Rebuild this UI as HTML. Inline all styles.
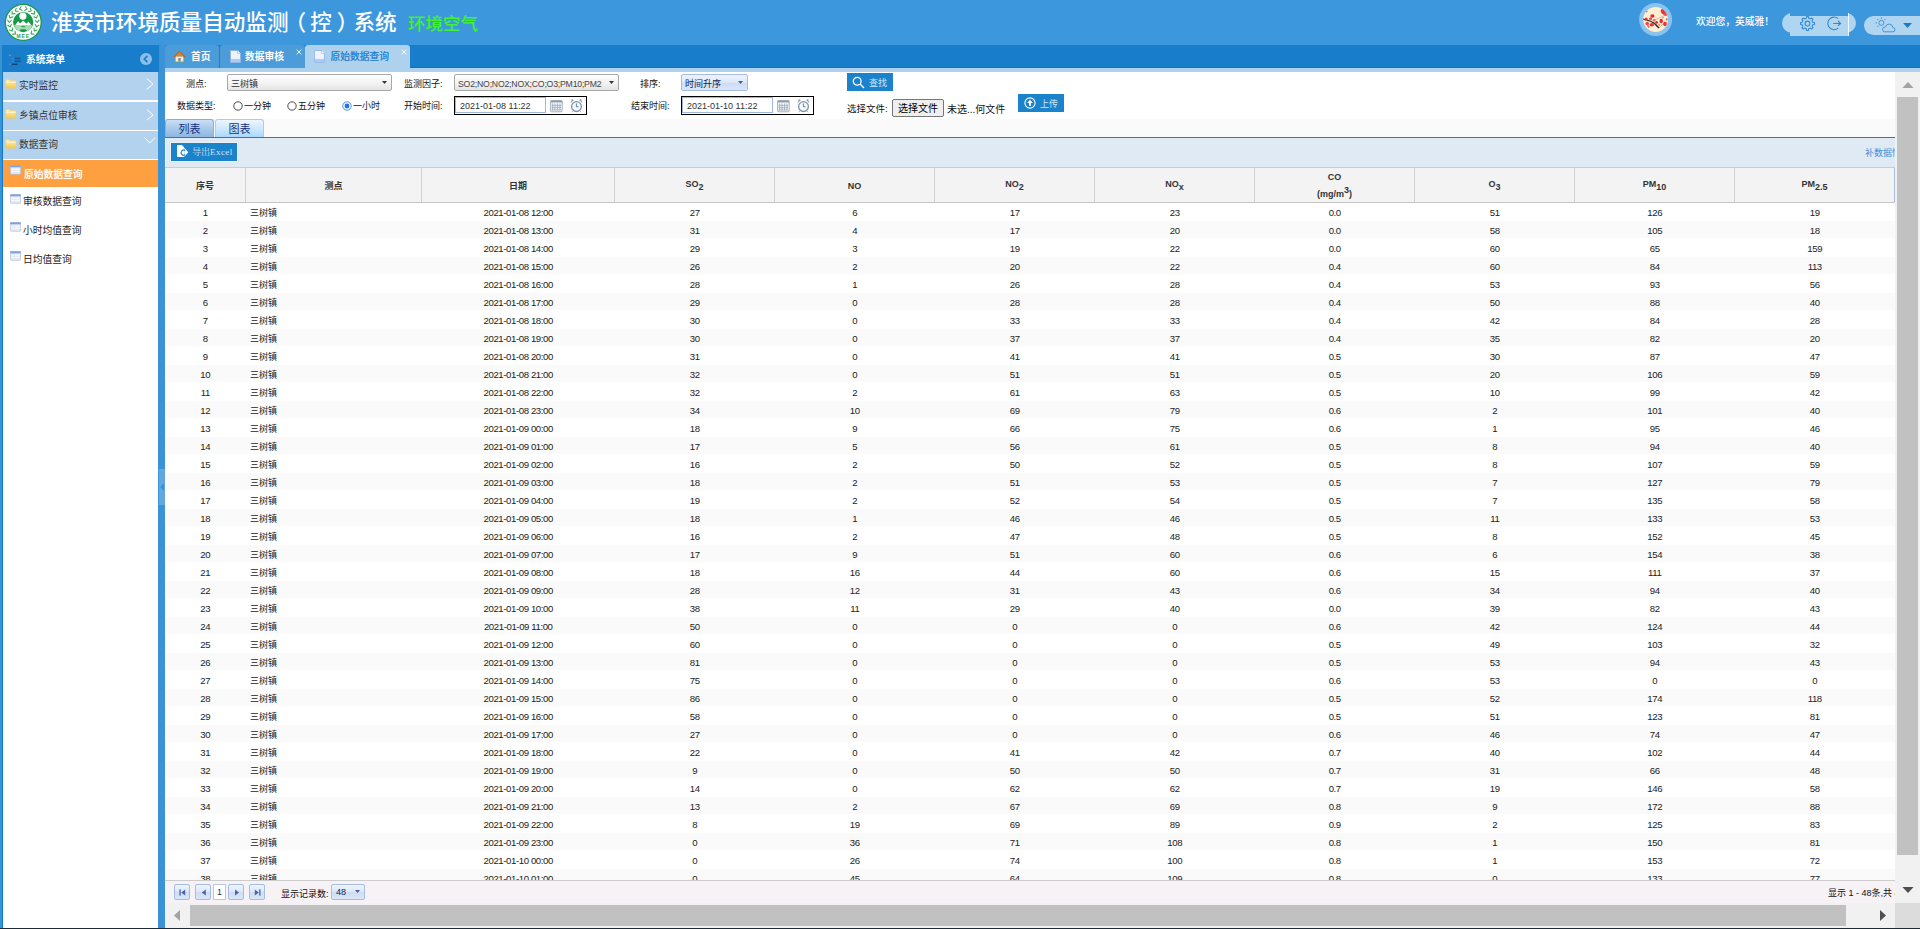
<!DOCTYPE html>
<html lang="zh-CN">
<head>
<meta charset="utf-8">
<title>淮安市环境质量自动监测（控）系统</title>
<style>
*{box-sizing:border-box;margin:0;padding:0}
html,body{width:1920px;height:929px;overflow:hidden;background:#fff}
body{position:relative;font-family:"Liberation Sans","Noto Sans CJK SC",sans-serif;font-size:9px;color:#222}
.abs{position:absolute}
/* header */
#hdr{left:0;top:0;width:1920px;height:45px;background:#3c97dd}
#title{left:51px;top:8px;height:30px;line-height:30px;font-size:21.6px;font-weight:500;color:#fff;white-space:nowrap}
#sub{left:408px;top:9px;height:30px;line-height:30px;font-size:17.5px;font-weight:500;color:#40f236;white-space:nowrap}
#welcome{left:1696px;top:11.5px;height:20px;line-height:20px;font-size:9.75px;font-weight:500;color:#fff;white-space:nowrap}
/* left edge + nav */
#ledge{left:0;top:45px;width:3px;height:884px;background:#3b93d6;border-right:1px solid #0f79cf}
#nav{left:0;top:45px;width:1920px;height:23px;background:#187ecb}
#navline{left:165px;top:67px;width:1755px;height:1px;background:#0c74c5}
#band{left:165px;top:68px;width:1755px;height:4px;background:#aed2ee}
/* sidebar */
#side{left:3px;top:45px;width:155px;height:883px;background:#fff;z-index:1}
#sidet{left:-1px;top:0;width:157px;height:27px;background:#187ecb;color:#fff;font-weight:bold;font-size:9.75px;line-height:27px}
.mi{left:0;width:155px;height:28px;background:#b3d2ee;font-size:9.75px;color:#333;line-height:28px;padding-left:16px}
.sm{left:0;width:155px;height:28px;font-size:9.75px;color:#222;line-height:30px;padding-left:20px}
#split{left:158px;top:45px;width:7px;height:884px;background:#3b93d6}
#handle{left:159px;top:469px;width:6px;height:36px;background:#62a8e0}
/* tabs */
.tab{top:45px;height:23px;line-height:23px;border-radius:3px 3px 0 0;font-size:9.75px;color:#fff;font-weight:bold;background:#4d9cda;white-space:nowrap}
/* content */
#content{left:165px;top:72px;width:1730px;height:831px;background:#fff;overflow:hidden}
.lbl{height:16px;line-height:16px;font-size:9px;color:#111;white-space:nowrap}
.sel{border:1px solid #a9a9a9;border-radius:2px;background:linear-gradient(#fff,#f4f4f4 50%,#e4e4e4);font-size:9px;line-height:18.5px;color:#333;padding-left:3px;white-space:nowrap;overflow:hidden}
.dbox{border:1px solid #000;background:#fff}
.dinp{left:0;top:0;height:16px;border:1px solid #9db7e0;font-size:9px;line-height:16.5px;color:#333;padding-left:4px;white-space:nowrap;overflow:hidden}
.btn{background:#1b83cc;color:#cfe6f8;font-size:9px;white-space:nowrap}
#subtabs{left:0;top:47px;width:1730px;height:18px;background:#fafafa}
.st{top:0;height:18px;line-height:18px;font-size:11px;color:#17307a;text-align:center;border:1px solid #8db2e3;border-bottom:0;border-radius:3px 3px 0 0}
#bline{left:0;top:65px;width:1730px;height:1px;background:#1a80cc}
#tbar{left:0;top:66px;width:1730px;height:29px;background:#e0eaf4;border-left:1px solid #f4f8fc}
/* grid */
#ghead{left:0;top:95px;width:1730px;height:36px;background:#f3f3f3;border-top:1px solid #ccc;border-bottom:1px solid #c6c6c6}
.hc{top:0;height:34px;padding-top:2px;border-right:1px solid #d0d0d0;text-align:center;font-weight:bold;font-size:9px;color:#333;display:flex;align-items:center;justify-content:center;line-height:13px}
.hc sub,.hc sup{font-size:9px}
#gbody{left:0;top:131px;width:1730px;height:677px;overflow:hidden}
#gbody table{border-collapse:collapse;table-layout:fixed;width:1730px}
#gbody td{height:18px;line-height:17px;padding-top:1px !important;text-align:center;font-size:9.6px;letter-spacing:-.4px;color:#222;padding:0 .5px 0 0;white-space:nowrap}
#gbody td.l{text-align:left;padding-left:4px;font-size:9px;letter-spacing:0}
#gbody td.l span{position:relative;top:1px}
#gbody tr.alt td{background:#fafafa;box-shadow:inset 0 -1px 0 #fff}
#gbody tr.alt td:first-child{box-shadow:inset 0 -1px 0 #fff,inset 1px 0 0 #fff}
#gline{left:0;top:808px;width:1730px;height:1px;background:#ccc}
#pager{left:0;top:809px;width:1730px;height:22px;background:#f6f2f5}
.pb{top:3px;width:16px;height:16px;border:1px solid #a3bde3;border-radius:2px;background:linear-gradient(#eef4fd,#dbe7f8 50%,#cddcf3 51%,#dbe7f8)}
/* scrollbars */
#vs{left:1895px;top:72px;width:25px;height:831px;background:#f1f1f1}
#hs{left:165px;top:903px;width:1730px;height:25px;background:#f1f1f1}
#corner{left:1895px;top:903px;width:25px;height:25px;background:#dcdcdc}
#bot{left:0;top:928px;width:1920px;height:1px;background:#1d2b36;z-index:5}
</style>
</head>
<body>
<div id="hdr" class="abs"></div>
<div id="title" class="abs">淮安市环境质量自动监测<span style="position:relative;left:-4px">（</span>控<span style="position:relative;left:5px">）</span>系统</div>
<div id="sub" class="abs">环境空气</div>
<div id="welcome" class="abs">欢迎您，英威雅！</div>


<!-- logo -->
<svg class="abs" style="left:4px;top:3px" width="39" height="39" viewBox="0 0 39 39">
  <circle cx="19.3" cy="19.4" r="18.6" fill="#169a47"/>
  <circle cx="19.3" cy="19.4" r="17.3" fill="#fff"/>
  <path d="M10.97 28.12 L11.53 30.97 L8.63 31.11 M27.63 28.12 L27.07 30.97 L29.97 31.11 M8.62 25.01 L8.25 27.89 L5.45 27.10 M29.98 25.01 L30.35 27.89 L33.15 27.10 M7.39 21.32 L6.12 23.93 L3.72 22.29 M31.21 21.32 L32.48 23.93 L34.88 22.29 M7.40 17.43 L5.36 19.50 L3.61 17.18 M31.20 17.43 L33.24 19.50 L34.99 17.18 M8.65 13.74 L6.06 15.05 L5.14 12.30 M29.95 13.74 L32.54 15.05 L33.46 12.30 M11.01 10.64 L8.13 11.06 L8.13 8.16 M27.59 10.64 L30.47 11.06 L30.47 8.16 M14.23 8.46 L11.37 7.94 L12.30 5.19 M24.37 8.46 L27.23 7.94 L26.30 5.19 M17.98 7.41 L15.43 6.01 L17.19 3.70 M20.62 7.41 L23.17 6.01 L21.41 3.70" fill="none" stroke="#2fa85a" stroke-width="1.05" stroke-linecap="round" stroke-linejoin="round"/>
  <circle cx="19.2" cy="19.2" r="10.1" fill="#169a47"/>
  <circle cx="18.9" cy="13.1" r="3.6" fill="#fff"/>
  <path d="M11.3 22 L14 18.2 L16 20.6 L19.2 17.6 L22.4 20.8 L24.4 18.6 L27.1 22 Z" fill="#fff"/>
  <path d="M10.2 22 H28.2 Q27.4 26.5 23.5 28.3 L21.5 26.2 H17 L15 28.3 Q11 26.5 10.2 22Z" fill="#a8dbb9"/>
  <rect x="17.3" y="23.2" width="3.8" height="1" fill="#169a47"/>
  <text x="19.3" y="34.6" font-size="5" font-weight="bold" fill="#2aa556" text-anchor="middle" font-family="Liberation Sans, sans-serif" letter-spacing="0.95">MEE</text>
</svg>
<!-- avatar -->
<svg class="abs" style="left:1639px;top:3px" width="34" height="34" viewBox="0 0 34 34">
  <defs><clipPath id="avc"><circle cx="16.6" cy="16.5" r="12.4"/></clipPath></defs>
  <circle cx="16.6" cy="16.5" r="16.5" fill="#8cc3ee"/>
  <circle cx="16.6" cy="16.5" r="12.4" fill="#fdefd2"/>
  <g clip-path="url(#avc)">
    <path d="M3.5 16.6 Q8 17.4 11.5 18.8 Q15 20.4 17.6 23.8 L19.6 25.6 L20.4 24.6 Q17.6 21.4 15.4 19.6 Q12 17.4 8 16.6 Q5.6 16 3.5 15.4Z" fill="#3a2424"/>
    <path d="M19.8 25 L23.6 21.4 L27.6 19.6" stroke="#c07878" stroke-width=".7" fill="none"/>
    <path d="M13 17.8 L19.5 15.4 L25 12.6" stroke="#cf9a9a" stroke-width=".7" fill="none"/>
    <path d="M8.6 21 L9.6 24.8" stroke="#7a4a4a" stroke-width=".7" fill="none"/>
    <ellipse cx="13.4" cy="13" rx="2.1" ry="1.7" fill="#e8262b"/><circle cx="11.6" cy="15.8" r="1.5" fill="#ee4a4d"/>
    <circle cx="7.2" cy="16" r="1.5" fill="#ea3538"/><circle cx="8.2" cy="20.6" r="1.8" fill="#ee4a4d"/>
    <ellipse cx="12.8" cy="21.8" rx="2.2" ry="1.8" fill="#ea3538"/><circle cx="17.6" cy="19.4" r="1.4" fill="#e8262b"/>
    <ellipse cx="22.2" cy="18" rx="1.7" ry="2.3" fill="#e8262b"/><ellipse cx="26" cy="21" rx="1.8" ry="2.2" fill="#ea3538"/>
    <ellipse cx="24.6" cy="8.6" rx="2.6" ry="3.2" transform="rotate(-35 24.6 8.6)" fill="#ea3538"/><circle cx="26.6" cy="11.4" r="1.7" fill="#ee4a4d"/>
    <circle cx="7.6" cy="8.4" r=".9" fill="#ee4a4d"/><circle cx="27.8" cy="16.4" r="1.1" fill="#ee6a6a"/>
    <circle cx="15.2" cy="17.2" r="1.3" fill="#f06a6a"/><circle cx="9.6" cy="23.6" r="1.1" fill="#f06a6a"/>
    <circle cx="20.2" cy="21.8" r="1" fill="#f07a7a"/><circle cx="24" cy="14.6" r=".9" fill="#f08a8a"/>
  </g>
</svg>
<!-- pills -->
<div class="abs" style="left:1782px;top:13px;width:74px;height:20px;border-radius:10px;background:#b0d5f1"></div>
<div class="abs" style="left:1790px;top:12px;width:59px;height:4px;background:#3c97dd"></div>
<div class="abs" style="left:1790px;top:16px;width:59px;height:20px;background:#b0d5f1"></div>
<div class="abs" style="left:1848px;top:13px;width:1px;height:23px;background:#f4fafe"></div>
<svg class="abs" style="left:1799.5px;top:15.6px" width="15" height="15" viewBox="0 0 15 15">
  <path d="M12.77 6.32 L14.44 6.57 L14.44 8.43 L12.77 8.68 L12.06 10.39 L13.06 11.75 L11.75 13.06 L10.39 12.06 L8.68 12.77 L8.43 14.44 L6.57 14.44 L6.32 12.77 L4.61 12.06 L3.25 13.06 L1.94 11.75 L2.94 10.39 L2.23 8.68 L0.56 8.43 L0.56 6.57 L2.23 6.32 L2.94 4.61 L1.94 3.25 L3.25 1.94 L4.61 2.94 L6.32 2.23 L6.57 0.56 L8.43 0.56 L8.68 2.23 L10.39 2.94 L11.75 1.94 L13.06 3.25 L12.06 4.61Z" fill="none" stroke="#2f86cf" stroke-width="1.05" stroke-linejoin="round"/>
  <circle cx="7.5" cy="7.5" r="2.4" fill="none" stroke="#2f86cf" stroke-width="1.05"/>
</svg>
<svg class="abs" style="left:1827px;top:16px" width="16" height="15" viewBox="0 0 16 15">
  <path d="M11.2 2.6 A6.3 6.3 0 1 0 11.2 12.2" fill="none" stroke="#2f86cf" stroke-width="1.05"/>
  <path d="M6.3 7.4 H13.4 M11 5 L13.6 7.4 L11 9.8" fill="none" stroke="#2f86cf" stroke-width="1.05"/>
</svg>
<div class="abs" style="left:1864px;top:16px;width:70px;height:19px;border-radius:9.5px;background:#b0d5f1"></div>
<svg class="abs" style="left:1874px;top:16px" width="24" height="18" viewBox="0 0 24 18">
  <g stroke="#3f90d6" stroke-width=".95" fill="none">
    <circle cx="7.4" cy="6.9" r="2.5"/>
    <path d="M7.4 1.2 V2.8 M3.3 2.9 L4.5 4.1 M1.6 6.9 H3.2 M3.3 10.9 L4.5 9.7 M11.5 2.9 L10.3 4.1"/>
    <path d="M10.3 15.8 H18.6 Q21 15.8 21 13.6 Q21 11.6 18.8 11.4 Q18.4 8 15.2 8 Q12.4 8 11.6 10.8 Q8.6 11 8.6 13.4 Q8.6 15.8 10.3 15.8Z" fill="#b0d5f1"/>
  </g>
</svg>
<svg class="abs" style="left:1903px;top:23px" width="9" height="5" viewBox="0 0 9 5"><path d="M0 0 H9 L4.5 5Z" fill="#187ecb"/></svg>

<div id="nav" class="abs"></div>
<div id="navline" class="abs"></div>
<div id="band" class="abs"></div>
<div id="ledge" class="abs"></div>

<!-- sidebar -->
<div id="side" class="abs">
  <div id="sidet" class="abs">
    <svg class="abs" style="left:7px;top:9px" width="13" height="12" viewBox="0 0 13 12"><g opacity=".95"><rect x=".3" y=".6" width="1.4" height="1.4" fill="#6fa8dc"/><rect x="2.8" y=".6" width="5.6" height="1.4" fill="#3d74ad"/><rect x="3.2" y="3.7" width="1.4" height="1.4" fill="#4f8fd0"/><rect x="5.6" y="3.7" width="6" height="1.4" fill="#1f4f82"/><rect x="3.2" y="6.5" width="1.4" height="1.4" fill="#4f8fd0"/><rect x="5.6" y="6.5" width="6" height="1.4" fill="#1f4f82"/><rect x=".3" y="9.6" width="1.4" height="1.4" fill="#5a92cc"/><rect x="2.8" y="9.6" width="5.6" height="1.4" fill="#163f6b"/></g></svg>
    <span class="abs" style="left:24px;top:1px">系统菜单</span>
    <svg class="abs" style="left:138px;top:8px" width="12" height="12" viewBox="0 0 12 12"><circle cx="6" cy="6" r="6" fill="#8cbfe8"/><path d="M7.4 2.9 L4.3 6 L7.4 9.1" fill="none" stroke="#187ecb" stroke-width="1.7"/></svg>
  </div>
  <div class="mi abs" style="top:27px"><svg class="abs" style="left:2px;top:7px" width="12" height="10" viewBox="0 0 12 10"><defs><linearGradient id="fg1" x1="0" y1="0" x2="0" y2="1"><stop offset="0" stop-color="#fff3b0"/><stop offset="1" stop-color="#f3c94d"/></linearGradient></defs><path d="M.6 1.2 Q.6 .5 1.3 .5 H4.2 L5 1.6 H10.3 Q11 1.6 11 2.3 V8.6 Q11 9.3 10.3 9.3 H1.3 Q.6 9.3 .6 8.6Z" fill="url(#fg1)" stroke="#e8c878" stroke-width=".5"/><path d="M.8 3.4 H10.8" stroke="#fffbe0" stroke-width=".7"/></svg><svg class="abs" style="left:142.5px;top:6px" width="8" height="12" viewBox="0 0 8 12"><path d="M.8 .6 L7 5.9 L.8 11.2" fill="none" stroke="#fff" stroke-width="1"/></svg>实时监控</div>
  <div class="mi abs" style="top:57px"><svg class="abs" style="left:2px;top:7px" width="12" height="10" viewBox="0 0 12 10"><defs><linearGradient id="fg2" x1="0" y1="0" x2="0" y2="1"><stop offset="0" stop-color="#fff3b0"/><stop offset="1" stop-color="#f3c94d"/></linearGradient></defs><path d="M.6 1.2 Q.6 .5 1.3 .5 H4.2 L5 1.6 H10.3 Q11 1.6 11 2.3 V8.6 Q11 9.3 10.3 9.3 H1.3 Q.6 9.3 .6 8.6Z" fill="url(#fg2)" stroke="#e8c878" stroke-width=".5"/><path d="M.8 3.4 H10.8" stroke="#fffbe0" stroke-width=".7"/></svg><svg class="abs" style="left:142.5px;top:6.5px" width="8" height="12" viewBox="0 0 8 12"><path d="M.8 .6 L7 5.9 L.8 11.2" fill="none" stroke="#fff" stroke-width="1"/></svg>乡镇点位审核</div>
  <div class="mi abs" style="top:86.3px"><svg class="abs" style="left:2px;top:7.3px" width="12" height="10" viewBox="0 0 12 10"><defs><linearGradient id="fg3" x1="0" y1="0" x2="0" y2="1"><stop offset="0" stop-color="#fff3b0"/><stop offset="1" stop-color="#f3c94d"/></linearGradient></defs><path d="M.6 1.2 Q.6 .5 1.3 .5 H4.2 L5 1.6 H10.3 Q11 1.6 11 2.3 V8.6 Q11 9.3 10.3 9.3 H1.3 Q.6 9.3 .6 8.6Z" fill="url(#fg3)" stroke="#e8c878" stroke-width=".5"/><path d="M.8 3.4 H10.8" stroke="#fffbe0" stroke-width=".7"/></svg><svg class="abs" style="left:140.5px;top:6px" width="12" height="7" viewBox="0 0 12 7"><path d="M.5 .5 L5.8 6 L11.2 .5" fill="none" stroke="#fff" stroke-width="1"/></svg>数据查询</div>
  <div class="sm abs" style="top:115.2px;height:26.6px;line-height:29.5px;padding-left:21px;background:#ffa040;color:#fff;text-shadow:0 0 1px #fff"><svg class="abs" style="left:7px;top:5.2px" width="11" height="10" viewBox="0 0 11 10"><rect x=".3" y=".3" width="10.4" height="9" rx=".8" fill="#e4e9f3" stroke="#a9b8d6" stroke-width=".6"/><rect x=".3" y=".3" width="10.4" height="2" fill="#7da2dc"/><path d="M1.6 4.2 H4 M5 4.2 H9.6 M1.6 6.4 H4 M5 6.4 H9.6" stroke="#fff" stroke-width="1"/></svg>原始数据查询</div>
  <div class="sm abs" style="top:141.8px"><svg class="abs" style="left:7px;top:7.2px" width="11" height="10" viewBox="0 0 11 10"><rect x=".3" y=".3" width="10.4" height="9" rx=".8" fill="#e4e9f3" stroke="#a9b8d6" stroke-width=".6"/><rect x=".3" y=".3" width="10.4" height="2" fill="#7da2dc"/><path d="M1.6 4.2 H4 M5 4.2 H9.6 M1.6 6.4 H4 M5 6.4 H9.6" stroke="#fff" stroke-width="1"/></svg>审核数据查询</div>
  <div class="sm abs" style="top:171px"><svg class="abs" style="left:7px;top:6.2px" width="11" height="10" viewBox="0 0 11 10"><rect x=".3" y=".3" width="10.4" height="9" rx=".8" fill="#e4e9f3" stroke="#a9b8d6" stroke-width=".6"/><rect x=".3" y=".3" width="10.4" height="2" fill="#7da2dc"/><path d="M1.6 4.2 H4 M5 4.2 H9.6 M1.6 6.4 H4 M5 6.4 H9.6" stroke="#fff" stroke-width="1"/></svg>小时均值查询</div>
  <div class="sm abs" style="top:199.5px"><svg class="abs" style="left:7px;top:6.7px" width="11" height="10" viewBox="0 0 11 10"><rect x=".3" y=".3" width="10.4" height="9" rx=".8" fill="#e4e9f3" stroke="#a9b8d6" stroke-width=".6"/><rect x=".3" y=".3" width="10.4" height="2" fill="#7da2dc"/><path d="M1.6 4.2 H4 M5 4.2 H9.6 M1.6 6.4 H4 M5 6.4 H9.6" stroke="#fff" stroke-width="1"/></svg>日均值查询</div>
</div>
<div id="split" class="abs"></div>
<div id="handle" class="abs"><svg class="abs" style="left:1px;top:14px" width="4" height="8" viewBox="0 0 4 8"><path d="M4 0 V8 L0 4Z" fill="#3b93d6"/></svg></div>

<!-- tabs -->
<div class="tab abs" style="left:165px;width:54px;padding-left:26px"><svg class="abs" style="left:8px;top:5px" width="13" height="13" viewBox="0 0 13 13"><path d="M.8 11.4 H12.2 V12.3 H.8Z" fill="#6aa84f"/><path d="M2.6 6.2 H10.4 V11.6 H2.6Z" fill="#f3ead8"/><path d="M5.3 8 H7.7 V11.6 H5.3Z" fill="#8a8a8a"/><path d="M6.5 .8 L12.4 6.6 L11.3 7.5 L6.5 2.9 L1.7 7.5 L.6 6.6Z" fill="#b5651d"/><path d="M6.5 2 L11 6.4 H2Z" fill="#c98a3c"/></svg>首页</div>
<div class="tab abs" style="left:220px;width:85px;padding-left:25px"><svg class="abs" style="left:9.5px;top:5px" width="11" height="13" viewBox="0 0 11 13"><path d="M.5 .5 H7.4 L10.5 3.6 V12.5 H.5Z" fill="#eef4fd" stroke="#8fb0e6" stroke-width=".8"/><path d="M7.4 .5 V3.6 H10.5" fill="#fff" stroke="#8fb0e6" stroke-width=".6"/><rect x=".9" y="9" width="9.2" height="3.1" fill="#a8cdf3"/></svg><svg class="abs" style="left:76px;top:4px" width="6" height="6" viewBox="0 0 6 6"><path d="M.6 .6 L5.4 5.4 M5.4 .6 L.6 5.4" stroke="#fff" stroke-width=".9"/></svg>数据审核</div>
<div class="tab abs" style="left:305px;width:105px;padding-left:25.6px;background:#aed2ee;color:#2b84d0;font-weight:normal;text-shadow:0 0 .6px #2b84d0"><svg class="abs" style="left:9.3px;top:5px" width="11" height="13" viewBox="0 0 11 13"><path d="M.5 .5 H7.4 L10.5 3.6 V12.5 H.5Z" fill="#eef4fd" stroke="#8fb0e6" stroke-width=".8"/><path d="M7.4 .5 V3.6 H10.5" fill="#fff" stroke="#8fb0e6" stroke-width=".6"/><rect x=".9" y="9" width="9.2" height="3.1" fill="#a8cdf3"/></svg><svg class="abs" style="left:96px;top:4px" width="6" height="6" viewBox="0 0 6 6"><path d="M.6 .6 L5.4 5.4 M5.4 .6 L.6 5.4" stroke="#fff" stroke-width=".9"/></svg>原始数据查询</div>

<!-- content -->
<div id="content" class="abs">
  <div class="lbl abs" style="left:21px;top:4px">测点:</div>
  <div class="sel abs" style="left:62px;top:2px;width:165px;height:17px">三树镇<svg class="abs" style="left:154px;top:5.5px" width="5" height="3" viewBox="0 0 5 3"><path d="M0 0 H5 L2.5 3Z" fill="#333"/></svg></div>
  <div class="lbl abs" style="left:239px;top:4px">监测因子:</div>
  <div class="sel abs" style="left:289px;top:2px;width:165px;height:17px;color:#444"><span style="font-size:8.7px;letter-spacing:-.2px">SO2;NO;NO2;NOX;CO;O3;PM10;PM2</span><svg class="abs" style="left:154px;top:5.5px" width="5" height="3" viewBox="0 0 5 3"><path d="M0 0 H5 L2.5 3Z" fill="#333"/></svg></div>
  <div class="lbl abs" style="left:475px;top:4px">排序:</div>
  <div class="sel abs" style="left:516px;top:2px;width:67px;height:17px;border-color:#a3bde3;background:linear-gradient(#eef4fd,#dbe7f8 50%,#cddcf3 51%,#dbe7f8);color:#15205a">时间升序<svg class="abs" style="left:56px;top:5.5px" width="5" height="3" viewBox="0 0 5 3"><path d="M0 0 H5 L2.5 3Z" fill="#4a5a9a"/></svg></div>
  <div class="btn abs" style="left:682px;top:1px;width:46px;height:18px;line-height:18px;padding-top:1px;padding-left:22px"><svg class="abs" style="left:5px;top:3px" width="13" height="13" viewBox="0 0 13 13"><circle cx="5.2" cy="5.2" r="3.9" fill="none" stroke="#fff" stroke-width="1.3"/><path d="M8 8 L12 12" stroke="#fff" stroke-width="1.5"/></svg>查找</div>

  <div class="lbl abs" style="left:12px;top:26px">数据类型:</div>
  <svg class="abs" style="left:68px;top:28.5px" width="10" height="10" viewBox="0 0 10 10"><circle cx="5" cy="5" r="4.2" fill="#fff" stroke="#3a3a3a" stroke-width=".9"/></svg><div class="lbl abs" style="left:79px;top:26px">一分钟</div>
  <svg class="abs" style="left:122px;top:28.5px" width="10" height="10" viewBox="0 0 10 10"><circle cx="5" cy="5" r="4.2" fill="#fff" stroke="#3a3a3a" stroke-width=".9"/></svg><div class="lbl abs" style="left:133px;top:26px">五分钟</div>
  <svg class="abs" style="left:177px;top:28.5px" width="10" height="10" viewBox="0 0 10 10"><circle cx="5" cy="5" r="4.2" fill="#fff" stroke="#1a73e8" stroke-width=".8"/><circle cx="5" cy="5" r="2.4" fill="#1a73e8"/></svg><div class="lbl abs" style="left:188px;top:26px">一小时</div>
  <div class="lbl abs" style="left:239px;top:26px">开始时间:</div>
  <div class="dbox abs" style="left:289px;top:24px;width:133px;height:19px"><div class="dinp abs" style="width:91px">2021-01-08 11:22</div><svg class="abs" style="left:95px;top:3px" width="13" height="13" viewBox="0 0 13 13"><rect x=".6" y=".6" width="11.6" height="11.2" rx=".8" fill="#f4f7fa" stroke="#9aa8b8" stroke-width=".9"/><rect x=".6" y=".6" width="11.6" height="1.8" fill="#8b9bad"/><path d="M2.6 3.4 V10.6 M5 3.4 V10.6 M7.6 3.4 V10.6 M10 3.4 V10.6 M1.6 5.4 H11 M1.6 7.6 H11 M1.6 9.8 H11" stroke="#9aa8b8" stroke-width=".8"/></svg><svg class="abs" style="left:115px;top:1.5px" width="13" height="14" viewBox="0 0 13 14"><path d="M1.2 3.8 Q1 1.6 3.6 1.4 M11.8 3.8 Q12 1.6 9.4 1.4" stroke="#9db0c4" stroke-width="1.1" fill="none"/><rect x="1.6" y=".4" width="1.2" height="1" fill="#666"/><rect x="10.2" y=".4" width="1.2" height="1" fill="#666"/><circle cx="6.5" cy="7.6" r="4.9" fill="#f2f8ff" stroke="#7f94aa" stroke-width="1.3"/><path d="M6.4 4.4 V7.8 H8.6" stroke="#6f8296" stroke-width="1" fill="none"/><path d="M3 12 L2 13.3 M10 12 L11 13.3" stroke="#aab8c6" stroke-width="1"/></svg></div>
  <div class="lbl abs" style="left:466px;top:26px">结束时间:</div>
  <div class="dbox abs" style="left:516px;top:24px;width:133px;height:19px"><div class="dinp abs" style="width:91px">2021-01-10 11:22</div><svg class="abs" style="left:95px;top:3px" width="13" height="13" viewBox="0 0 13 13"><rect x=".6" y=".6" width="11.6" height="11.2" rx=".8" fill="#f4f7fa" stroke="#9aa8b8" stroke-width=".9"/><rect x=".6" y=".6" width="11.6" height="1.8" fill="#8b9bad"/><path d="M2.6 3.4 V10.6 M5 3.4 V10.6 M7.6 3.4 V10.6 M10 3.4 V10.6 M1.6 5.4 H11 M1.6 7.6 H11 M1.6 9.8 H11" stroke="#9aa8b8" stroke-width=".8"/></svg><svg class="abs" style="left:115px;top:1.5px" width="13" height="14" viewBox="0 0 13 14"><path d="M1.2 3.8 Q1 1.6 3.6 1.4 M11.8 3.8 Q12 1.6 9.4 1.4" stroke="#9db0c4" stroke-width="1.1" fill="none"/><rect x="1.6" y=".4" width="1.2" height="1" fill="#666"/><rect x="10.2" y=".4" width="1.2" height="1" fill="#666"/><circle cx="6.5" cy="7.6" r="4.9" fill="#f2f8ff" stroke="#7f94aa" stroke-width="1.3"/><path d="M6.4 4.4 V7.8 H8.6" stroke="#6f8296" stroke-width="1" fill="none"/><path d="M3 12 L2 13.3 M10 12 L11 13.3" stroke="#aab8c6" stroke-width="1"/></svg></div>
  <div class="lbl abs" style="left:682px;top:29px;font-size:9.5px">选择文件:</div>
  <div class="abs" style="left:727px;top:27px;width:52px;height:18px;border:1px solid #767676;border-radius:2px;background:#efefef;font-size:10px;line-height:18px;text-align:center;color:#000">选择文件</div>
  <div class="lbl abs" style="left:782px;top:30px;font-size:10px">未选...何文件</div>
  <div class="btn abs" style="left:853px;top:22px;width:46px;height:18px;line-height:18px;padding-top:1px;padding-left:22px"><svg class="abs" style="left:5.5px;top:3px" width="12" height="12" viewBox="0 0 12 12"><circle cx="6" cy="6" r="5.1" fill="none" stroke="#fff" stroke-width="1.1"/><path d="M6 2.8 L8.9 6 H6.9 V9 H5.1 V6 H3.1Z" fill="#fff"/></svg>上传</div>

  <div id="subtabs" class="abs">
    <div class="st abs" style="left:0;width:49px;background:linear-gradient(#c9dff6,#a9c9ea 50%,#8fb6df);border-color:#8aaedb">列表</div>
    <div class="st abs" style="left:50px;width:49px;background:linear-gradient(#ecf6ff,#cfe8fd 50%,#a9d8fc);border-color:#a9cdf0">图表</div>
  </div>
  <div id="bline" class="abs"></div>
  <div id="tbar" class="abs">
    <div class="btn abs" style="left:5px;top:5px;width:66px;height:18px;line-height:18px;padding-left:21px;font-family:'Liberation Serif','Noto Serif CJK SC',serif;font-size:9px;box-shadow:0 0 0 1px #e8f0f8"><svg class="abs" style="left:6px;top:2px" width="12" height="13" viewBox="0 0 12 13"><path d="M0 0 H5 L7 2.2 V12 H0Z" fill="#fff"/><path d="M7.2 2.6 L11.3 7.2 L7.2 12Z" fill="#fff"/><path d="M8.2 5.4 A2.6 2.6 0 1 0 8.2 9.8" fill="none" stroke="#1b83cc" stroke-width="1.15"/></svg>导出<span style="letter-spacing:.45px;font-size:9px">Excel</span></div>
    <div class="abs" style="left:1699px;top:7.5px;height:14px;line-height:14px;font-size:9px;color:#3a8fd6;white-space:nowrap">补数据情况</div>
  </div>

  <div id="ghead" class="abs">
    <div class="hc abs" style="left:0;width:81px">序号</div>
    <div class="hc abs" style="left:81px;width:176px">测点</div>
    <div class="hc abs" style="left:257px;width:193px">日期</div>
    <div class="hc abs" style="left:450px;width:160px"><span>SO<sub>2</sub></span></div>
    <div class="hc abs" style="left:610px;width:160px">NO</div>
    <div class="hc abs" style="left:770px;width:160px"><span>NO<sub>2</sub></span></div>
    <div class="hc abs" style="left:930px;width:160px"><span>NO<sub>x</sub></span></div>
    <div class="hc abs" style="left:1090px;width:160px"><span>CO<br>(mg/m<sup>3</sup>)</span></div>
    <div class="hc abs" style="left:1250px;width:160px"><span>O<sub>3</sub></span></div>
    <div class="hc abs" style="left:1410px;width:160px"><span>PM<sub>10</sub></span></div>
    <div class="hc abs" style="left:1570px;width:160px;border-right-color:#a9bfe0"><span>PM<sub>2.5</sub></span></div>
  </div>
  <div id="gbody" class="abs">
    <table>
      <colgroup><col style="width:81px"><col style="width:176px"><col style="width:193px"><col style="width:160px"><col style="width:160px"><col style="width:160px"><col style="width:160px"><col style="width:160px"><col style="width:160px"><col style="width:160px"><col style="width:160px"></colgroup>
<tr><td>1</td><td class="l"><span>三树镇</span></td><td>2021-01-08 12:00</td><td>27</td><td>6</td><td>17</td><td>23</td><td>0.0</td><td>51</td><td>126</td><td>19</td></tr>
<tr class="alt"><td>2</td><td class="l"><span>三树镇</span></td><td>2021-01-08 13:00</td><td>31</td><td>4</td><td>17</td><td>20</td><td>0.0</td><td>58</td><td>105</td><td>18</td></tr>
<tr><td>3</td><td class="l"><span>三树镇</span></td><td>2021-01-08 14:00</td><td>29</td><td>3</td><td>19</td><td>22</td><td>0.0</td><td>60</td><td>65</td><td>159</td></tr>
<tr class="alt"><td>4</td><td class="l"><span>三树镇</span></td><td>2021-01-08 15:00</td><td>26</td><td>2</td><td>20</td><td>22</td><td>0.4</td><td>60</td><td>84</td><td>113</td></tr>
<tr><td>5</td><td class="l"><span>三树镇</span></td><td>2021-01-08 16:00</td><td>28</td><td>1</td><td>26</td><td>28</td><td>0.4</td><td>53</td><td>93</td><td>56</td></tr>
<tr class="alt"><td>6</td><td class="l"><span>三树镇</span></td><td>2021-01-08 17:00</td><td>29</td><td>0</td><td>28</td><td>28</td><td>0.4</td><td>50</td><td>88</td><td>40</td></tr>
<tr><td>7</td><td class="l"><span>三树镇</span></td><td>2021-01-08 18:00</td><td>30</td><td>0</td><td>33</td><td>33</td><td>0.4</td><td>42</td><td>84</td><td>28</td></tr>
<tr class="alt"><td>8</td><td class="l"><span>三树镇</span></td><td>2021-01-08 19:00</td><td>30</td><td>0</td><td>37</td><td>37</td><td>0.4</td><td>35</td><td>82</td><td>20</td></tr>
<tr><td>9</td><td class="l"><span>三树镇</span></td><td>2021-01-08 20:00</td><td>31</td><td>0</td><td>41</td><td>41</td><td>0.5</td><td>30</td><td>87</td><td>47</td></tr>
<tr class="alt"><td>10</td><td class="l"><span>三树镇</span></td><td>2021-01-08 21:00</td><td>32</td><td>0</td><td>51</td><td>51</td><td>0.5</td><td>20</td><td>106</td><td>59</td></tr>
<tr><td>11</td><td class="l"><span>三树镇</span></td><td>2021-01-08 22:00</td><td>32</td><td>2</td><td>61</td><td>63</td><td>0.5</td><td>10</td><td>99</td><td>42</td></tr>
<tr class="alt"><td>12</td><td class="l"><span>三树镇</span></td><td>2021-01-08 23:00</td><td>34</td><td>10</td><td>69</td><td>79</td><td>0.6</td><td>2</td><td>101</td><td>40</td></tr>
<tr><td>13</td><td class="l"><span>三树镇</span></td><td>2021-01-09 00:00</td><td>18</td><td>9</td><td>66</td><td>75</td><td>0.6</td><td>1</td><td>95</td><td>46</td></tr>
<tr class="alt"><td>14</td><td class="l"><span>三树镇</span></td><td>2021-01-09 01:00</td><td>17</td><td>5</td><td>56</td><td>61</td><td>0.5</td><td>8</td><td>94</td><td>40</td></tr>
<tr><td>15</td><td class="l"><span>三树镇</span></td><td>2021-01-09 02:00</td><td>16</td><td>2</td><td>50</td><td>52</td><td>0.5</td><td>8</td><td>107</td><td>59</td></tr>
<tr class="alt"><td>16</td><td class="l"><span>三树镇</span></td><td>2021-01-09 03:00</td><td>18</td><td>2</td><td>51</td><td>53</td><td>0.5</td><td>7</td><td>127</td><td>79</td></tr>
<tr><td>17</td><td class="l"><span>三树镇</span></td><td>2021-01-09 04:00</td><td>19</td><td>2</td><td>52</td><td>54</td><td>0.5</td><td>7</td><td>135</td><td>58</td></tr>
<tr class="alt"><td>18</td><td class="l"><span>三树镇</span></td><td>2021-01-09 05:00</td><td>18</td><td>1</td><td>46</td><td>46</td><td>0.5</td><td>11</td><td>133</td><td>53</td></tr>
<tr><td>19</td><td class="l"><span>三树镇</span></td><td>2021-01-09 06:00</td><td>16</td><td>2</td><td>47</td><td>48</td><td>0.5</td><td>8</td><td>152</td><td>45</td></tr>
<tr class="alt"><td>20</td><td class="l"><span>三树镇</span></td><td>2021-01-09 07:00</td><td>17</td><td>9</td><td>51</td><td>60</td><td>0.6</td><td>6</td><td>154</td><td>38</td></tr>
<tr><td>21</td><td class="l"><span>三树镇</span></td><td>2021-01-09 08:00</td><td>18</td><td>16</td><td>44</td><td>60</td><td>0.6</td><td>15</td><td>111</td><td>37</td></tr>
<tr class="alt"><td>22</td><td class="l"><span>三树镇</span></td><td>2021-01-09 09:00</td><td>28</td><td>12</td><td>31</td><td>43</td><td>0.6</td><td>34</td><td>94</td><td>40</td></tr>
<tr><td>23</td><td class="l"><span>三树镇</span></td><td>2021-01-09 10:00</td><td>38</td><td>11</td><td>29</td><td>40</td><td>0.0</td><td>39</td><td>82</td><td>43</td></tr>
<tr class="alt"><td>24</td><td class="l"><span>三树镇</span></td><td>2021-01-09 11:00</td><td>50</td><td>0</td><td>0</td><td>0</td><td>0.6</td><td>42</td><td>124</td><td>44</td></tr>
<tr><td>25</td><td class="l"><span>三树镇</span></td><td>2021-01-09 12:00</td><td>60</td><td>0</td><td>0</td><td>0</td><td>0.5</td><td>49</td><td>103</td><td>32</td></tr>
<tr class="alt"><td>26</td><td class="l"><span>三树镇</span></td><td>2021-01-09 13:00</td><td>81</td><td>0</td><td>0</td><td>0</td><td>0.5</td><td>53</td><td>94</td><td>43</td></tr>
<tr><td>27</td><td class="l"><span>三树镇</span></td><td>2021-01-09 14:00</td><td>75</td><td>0</td><td>0</td><td>0</td><td>0.6</td><td>53</td><td>0</td><td>0</td></tr>
<tr class="alt"><td>28</td><td class="l"><span>三树镇</span></td><td>2021-01-09 15:00</td><td>86</td><td>0</td><td>0</td><td>0</td><td>0.5</td><td>52</td><td>174</td><td>118</td></tr>
<tr><td>29</td><td class="l"><span>三树镇</span></td><td>2021-01-09 16:00</td><td>58</td><td>0</td><td>0</td><td>0</td><td>0.5</td><td>51</td><td>123</td><td>81</td></tr>
<tr class="alt"><td>30</td><td class="l"><span>三树镇</span></td><td>2021-01-09 17:00</td><td>27</td><td>0</td><td>0</td><td>0</td><td>0.6</td><td>46</td><td>74</td><td>47</td></tr>
<tr><td>31</td><td class="l"><span>三树镇</span></td><td>2021-01-09 18:00</td><td>22</td><td>0</td><td>41</td><td>42</td><td>0.7</td><td>40</td><td>102</td><td>44</td></tr>
<tr class="alt"><td>32</td><td class="l"><span>三树镇</span></td><td>2021-01-09 19:00</td><td>9</td><td>0</td><td>50</td><td>50</td><td>0.7</td><td>31</td><td>66</td><td>48</td></tr>
<tr><td>33</td><td class="l"><span>三树镇</span></td><td>2021-01-09 20:00</td><td>14</td><td>0</td><td>62</td><td>62</td><td>0.7</td><td>19</td><td>146</td><td>58</td></tr>
<tr class="alt"><td>34</td><td class="l"><span>三树镇</span></td><td>2021-01-09 21:00</td><td>13</td><td>2</td><td>67</td><td>69</td><td>0.8</td><td>9</td><td>172</td><td>88</td></tr>
<tr><td>35</td><td class="l"><span>三树镇</span></td><td>2021-01-09 22:00</td><td>8</td><td>19</td><td>69</td><td>89</td><td>0.9</td><td>2</td><td>125</td><td>83</td></tr>
<tr class="alt"><td>36</td><td class="l"><span>三树镇</span></td><td>2021-01-09 23:00</td><td>0</td><td>36</td><td>71</td><td>108</td><td>0.8</td><td>1</td><td>150</td><td>81</td></tr>
<tr><td>37</td><td class="l"><span>三树镇</span></td><td>2021-01-10 00:00</td><td>0</td><td>26</td><td>74</td><td>100</td><td>0.8</td><td>1</td><td>153</td><td>72</td></tr>
<tr class="alt"><td>38</td><td class="l"><span>三树镇</span></td><td>2021-01-10 01:00</td><td>0</td><td>45</td><td>64</td><td>109</td><td>0.8</td><td>0</td><td>133</td><td>77</td></tr>
    </table>
  </div>
  <div id="gline" class="abs"></div>
  <div id="pager" class="abs">
    <div class="pb abs" style="left:9px"><svg class="abs" style="left:4px;top:3.5px" width="7" height="7" viewBox="0 0 7 7"><rect x=".4" y=".4" width="1.3" height="6.2" fill="#4b62a8"/><path d="M6.2 .4 V6.6 L2.2 3.5Z" fill="#4b62a8"/></svg></div>
    <div class="pb abs" style="left:30px"><svg class="abs" style="left:4.5px;top:3.5px" width="6" height="7" viewBox="0 0 6 7"><path d="M4.8 .4 V6.6 L.8 3.5Z" fill="#4b62a8"/></svg></div>
    <div class="abs" style="left:48px;top:3px;width:13px;height:16px;border:1px solid #b5c7e3;background:#fff;text-align:center;line-height:15.5px;font-size:9px;color:#333">1</div>
    <div class="pb abs" style="left:63px"><svg class="abs" style="left:5px;top:3.5px" width="6" height="7" viewBox="0 0 6 7"><path d="M1 .4 V6.6 L5 3.5Z" fill="#4b62a8"/></svg></div>
    <div class="pb abs" style="left:84px"><svg class="abs" style="left:4px;top:3.5px" width="7" height="7" viewBox="0 0 7 7"><path d="M.8 .4 V6.6 L4.8 3.5Z" fill="#4b62a8"/><rect x="5.2" y=".4" width="1.3" height="6.2" fill="#4b62a8"/></svg></div>
    <div class="lbl abs" style="left:116px;top:4.5px">显示记录数:</div>
    <div class="pb abs" style="left:166px;width:34px;line-height:15.5px;padding-left:4px;color:#15205a;font-size:9px">48<svg class="abs" style="left:23px;top:5px" width="5" height="3" viewBox="0 0 5 3"><path d="M0 0 H5 L2.5 3Z" fill="#4a5a9a"/></svg></div>
    <div class="lbl abs" style="left:1663px;top:3.5px">显示 1 - 48条,共 48条</div>
  </div>
</div>

<!-- scrollbars -->
<div id="vs" class="abs">
  <svg class="abs" style="left:7px;top:10px" width="12" height="6" viewBox="0 0 12 6"><path d="M6 0 L11.6 6 H.4Z" fill="#a3a3a3"/></svg>
  <svg class="abs" style="left:7px;top:815px" width="12" height="6" viewBox="0 0 12 6"><path d="M.4 0 H11.6 L6 6Z" fill="#505050"/></svg>
  <div class="abs" style="left:2px;top:25px;width:21px;height:758px;background:#c1c1c1"></div>
</div>
<div id="hs" class="abs">
  <svg class="abs" style="left:9px;top:7px" width="6" height="11" viewBox="0 0 6 11"><path d="M6 0 V11 L0 5.5Z" fill="#a3a3a3"/></svg>
  <svg class="abs" style="left:1715px;top:7px" width="6" height="11" viewBox="0 0 6 11"><path d="M0 0 V11 L6 5.5Z" fill="#505050"/></svg>
  <div class="abs" style="left:25px;top:2px;width:1656px;height:21px;background:#c1c1c1"></div>
</div>
<div id="corner" class="abs"></div>
<div id="bot" class="abs"></div>
</body>
</html>
